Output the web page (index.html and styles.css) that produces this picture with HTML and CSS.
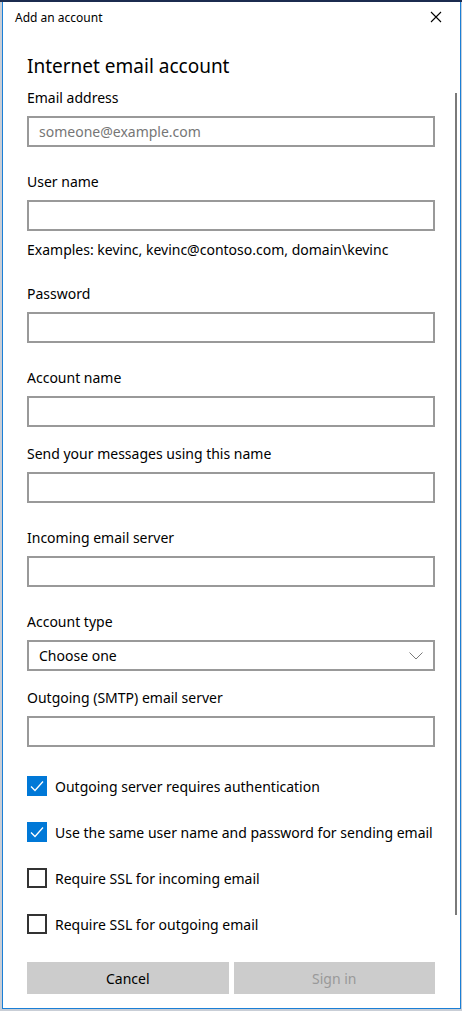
FILE: index.html
```html
<!DOCTYPE html>
<html lang="en">
<head>
    <meta charset="UTF-8">
    <meta name="viewport" content="width=device-width, initial-scale=1.0">
    <title>Add an account</title>
    <link rel="stylesheet" href="styles.css">
</head>
<body>
    <div class="dialog">
        <div class="titlebar">
            <span class="title">Add an account</span>
            <button class="close-button" aria-label="Close">
                <svg width="12" height="12" viewBox="0 0 12 12"><path d="M1 1 L11 11 M11 1 L1 11" stroke="#000" stroke-width="1.1" fill="none"/></svg>
            </button>
        </div>

        <div class="content">
            <h1>Internet email account</h1>

            <div class="field">
                <label for="email">Email address</label>
                <input type="text" id="email" placeholder="someone@example.com">
            </div>

            <div class="field">
                <label for="username">User name</label>
                <input type="text" id="username">
                <p class="hint">Examples: kevinc, kevinc@contoso.com, domain\kevinc</p>
            </div>

            <div class="field">
                <label for="password">Password</label>
                <input type="password" id="password">
            </div>

            <div class="field">
                <label for="accountname">Account name</label>
                <input type="text" id="accountname">
            </div>

            <div class="field tight">
                <label for="sendname">Send your messages using this name</label>
                <input type="text" id="sendname">
            </div>

            <div class="field">
                <label for="incoming">Incoming email server</label>
                <input type="text" id="incoming">
            </div>

            <div class="field">
                <label>Account type</label>
                <div class="select">
                    <span>Choose one</span>
                    <svg width="14" height="8" viewBox="0 0 14 8"><path d="M0.5 0.5 L7 7 L13.5 0.5" stroke="#7a7a7a" stroke-width="1" fill="none"/></svg>
                </div>
            </div>

            <div class="field tight">
                <label for="outgoing">Outgoing (SMTP) email server</label>
                <input type="text" id="outgoing">
            </div>

            <div class="checks">
                <div class="check-row">
                    <span class="box checked">
                        <svg width="14" height="12" viewBox="0 0 14 12"><path d="M1 6.5 L5 10.5 L13 1.5" stroke="#fff" stroke-width="1.3" fill="none"/></svg>
                    </span>
                    <span>Outgoing server requires authentication</span>
                </div>
                <div class="check-row">
                    <span class="box checked">
                        <svg width="14" height="12" viewBox="0 0 14 12"><path d="M1 6.5 L5 10.5 L13 1.5" stroke="#fff" stroke-width="1.3" fill="none"/></svg>
                    </span>
                    <span>Use the same user name and password for sending email</span>
                </div>
                <div class="check-row">
                    <span class="box"></span>
                    <span>Require SSL for incoming email</span>
                </div>
                <div class="check-row">
                    <span class="box"></span>
                    <span>Require SSL for outgoing email</span>
                </div>
            </div>

            <div class="scrollbar"></div>
        </div>

        <div class="actions">
            <button class="btn">Cancel</button>
            <button class="btn disabled">Sign in</button>
        </div>
    </div>
</body>
</html>
```

FILE: styles.css
```css
* {
    margin: 0;
    padding: 0;
    box-sizing: border-box;
    font-family: "Noto Sans", "Open Sans", sans-serif;
}

body {
    width: 462px;
    height: 1011px;
    padding: 2px 1px 2px 2px;
    background: linear-gradient(#1b2b4f 0, #1b2b4f 2px, #c9ced6 2px);
    overflow: hidden;
}

.dialog {
    height: 1007px;
    background: #fff;
    border: 1px solid #1a7fd6;
    border-top: none;
    display: flex;
    flex-direction: column;
    position: relative;
}

.titlebar {
    height: 30px;
    display: flex;
    align-items: center;
    justify-content: space-between;
    padding: 0 12px 0 12px;
}

.title {
    font-size: 12px;
    color: #000;
}

.close-button {
    background: transparent;
    border: none;
    width: 24px;
    height: 24px;
    display: flex;
    align-items: center;
    justify-content: center;
}

.content {
    flex: 1;
    padding: 21px 25px 0 24px;
}

.content h1 {
    font-size: 19px;
    font-weight: 400;
    line-height: 26px;
    color: #000;
    margin-bottom: 9px;
}

.field {
    margin-bottom: 25px;
}

.field.tight {
    margin-top: -8px;
}

.field label {
    display: block;
    font-size: 14px;
    line-height: 20px;
    color: #000;
    margin-bottom: 8px;
}

.field input,
.select {
    width: 100%;
    height: 31px;
    border: 2px solid #999;
    background: #fff;
    font-size: 14px;
    padding: 0 10px;
    color: #000;
}

.field input::placeholder {
    color: #767676;
}

.hint {
    font-size: 14px;
    line-height: 20px;
    margin-top: 9px;
    margin-bottom: -1px;
}

.select {
    display: flex;
    align-items: center;
    justify-content: space-between;
    padding-right: 10px;
}

.checks {
    margin-top: 29px;
    display: flex;
    flex-direction: column;
    gap: 26px;
}

.check-row {
    display: flex;
    align-items: center;
    gap: 8px;
    height: 20px;
    font-size: 14px;
    color: #000;
}

.box {
    width: 20px;
    height: 20px;
    border: 2px solid #333;
    display: flex;
    align-items: center;
    justify-content: center;
    flex-shrink: 0;
}

.box.checked {
    background: #0078d7;
    border-color: #0078d7;
}

.scrollbar {
    position: absolute;
    top: 91px;
    right: 3px;
    width: 2px;
    height: 822px;
    background: #7a7a7a;
}

.actions {
    display: flex;
    gap: 5px;
    padding: 0 25px 14px 24px;
}

.btn {
    flex: 1;
    height: 32px;
    border: none;
    background: #cccccc;
    font-size: 14px;
    color: #000;
}

.btn.disabled {
    color: #999;
}
```
